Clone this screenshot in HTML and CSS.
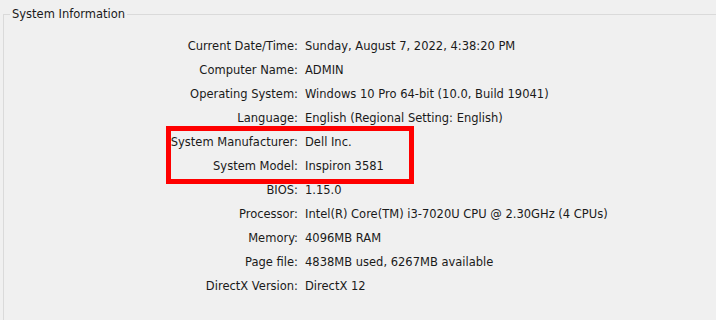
FILE: index.html
```html
<!DOCTYPE html>
<html>
<head>
<meta charset="utf-8">
<link rel="stylesheet" href="styles.css">
</head>
<body>
<fieldset class="group">
  <legend class="group-title">System Information</legend>
  <div class="info">
    <div class="row"><span class="label">Current Date/Time:</span><span class="value">Sunday, August 7, 2022, 4:38:20 PM</span></div>
    <div class="row"><span class="label">Computer Name:</span><span class="value">ADMIN</span></div>
    <div class="row"><span class="label">Operating System:</span><span class="value">Windows 10 Pro 64-bit (10.0, Build 19041)</span></div>
    <div class="row"><span class="label">Language:</span><span class="value">English (Regional Setting: English)</span></div>
    <div class="highlight">
      <div class="row"><span class="label">System Manufacturer:</span><span class="value">Dell Inc.</span></div>
      <div class="row"><span class="label">System Model:</span><span class="value">Inspiron 3581</span></div>
      <div class="mark"></div>
    </div>
    <div class="row"><span class="label">BIOS:</span><span class="value">1.15.0</span></div>
    <div class="row"><span class="label">Processor:</span><span class="value">Intel(R) Core(TM) i3-7020U CPU @ 2.30GHz (4 CPUs)</span></div>
    <div class="row"><span class="label">Memory:</span><span class="value">4096MB RAM</span></div>
    <div class="row"><span class="label">Page file:</span><span class="value">4838MB used, 6267MB available</span></div>
    <div class="row"><span class="label">DirectX Version:</span><span class="value">DirectX 12</span></div>
  </div>
</fieldset>
</body>
</html>
```
FILE: styles.css
```css
html, body {
  margin: 0;
  padding: 0;
  background: #f0f0f0;
  width: 716px;
  height: 320px;
  overflow: hidden;
}
body {
  font-family: "DejaVu Sans", sans-serif;
  font-size: 11.5px;
  color: #1a1a1a;
}
.group {
  box-sizing: border-box;
  margin: 7px 0 0 3px;
  padding: 0;
  border: 1px solid #dadada;
  border-right: none;
  border-bottom: none;
  height: 313px;
  min-width: 0;
}
.group-title {
  margin-left: 6px;
  padding: 0 2px;
  font-size: 11.5px;
  color: #1a1a1a;
}
.info {
  padding-top: 13px;
}
.highlight {
  position: relative;
}
.mark {
  position: absolute;
  left: 162px;
  top: -4px;
  width: 248px;
  height: 58px;
  box-sizing: border-box;
  border: 5px solid #ff0000;
}
.row {
  display: flex;
  height: 24px;
  line-height: 24px;
  gap: 7px;
  white-space: nowrap;
}
.label {
  width: 294px;
  text-align: right;
  flex-shrink: 0;
}
.value {
  flex: 1;
}
```
